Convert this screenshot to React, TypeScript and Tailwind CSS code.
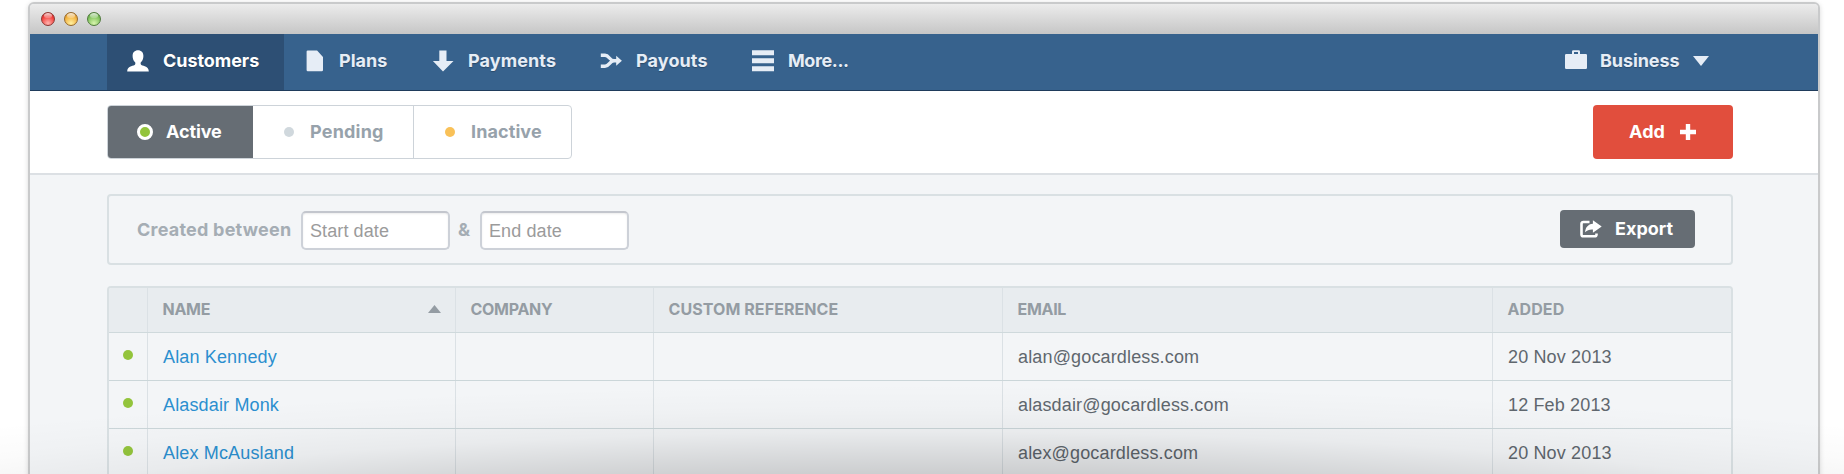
import React from "react";

type IconProps = { className?: string };

const UserIcon = ({ className }: IconProps) => (
  <svg viewBox="0 0 22 22" className={className} fill="currentColor">
    <path d="M11 .3c3.300 0 5.400 2.200 5.400 5.700 0 2.500-.9 4.900-2.300 6.100-.7.600-.7 2.300.2 2.800 2.600 1.200 7.500 1.500 7.500 6.500H.2c0-5 4.900-5.300 7.500-6.500.9-.5.9-2.200.2-2.800C6.500 10.900 5.600 8.500 5.600 6c0-3.500 2.100-5.700 5.400-5.700z" />
  </svg>
);
const FileIcon = ({ className }: IconProps) => (
  <svg viewBox="0 0 22 22" className={className} fill="currentColor">
    <path d="M4.800 .4h9.300l5.900 6.500v13.200a1.200 1.200 0 0 1-1.200 1.200h-14a1.200 1.200 0 0 1-1.200-1.200V1.600a1.200 1.200 0 0 1 1.200-1.200z" />
  </svg>
);
const DownIcon = ({ className }: IconProps) => (
  <svg viewBox="0 0 22 22" className={className} fill="currentColor">
    <path d="M7.300 .4h7.200v10.700h7.000L11 21.500.9 11.100h6.400z" />
  </svg>
);
const MergeIcon = ({ className }: IconProps) => (
  <svg viewBox="0 0 22 22" className={className} fill="none" stroke="currentColor" strokeWidth="3.400">
    <path d="M.8 5.300H5c4.200 0 4.600 5.500 9 5.500h3M.8 16.300H5c4.200 0 4.600-5.500 9-5.500" />
    <path d="M16.200 5.800l5.700 5-5.700 5z" fill="currentColor" stroke="none" />
  </svg>
);
const MenuIcon = ({ className }: IconProps) => (
  <svg viewBox="0 0 22 22" className={className} fill="currentColor">
    <path d="M0 .3h22v5H0zM0 8.300h22v5H0zM0 16.300h22v5H0z" />
  </svg>
);
const CaseIcon = ({ className }: IconProps) => (
  <svg viewBox="0 0 22 22" className={className} fill="currentColor">
    <path fillRule="evenodd" d="M8.300 .3h5.400a1.300 1.300 0 0 1 1.300 1.300V4h5.700A1.200 1.200 0 0 1 22 5.200v12.600a1.200 1.200 0 0 1-1.200 1.200H1.200A1.200 1.200 0 0 1 0 17.800V5.200A1.200 1.200 0 0 1 1.200 4H7V1.600A1.300 1.300 0 0 1 8.300.3zM9 2v2h4V2z" />
  </svg>
);
const ShareIcon = ({ className }: IconProps) => (
  <svg viewBox="0 0 22 18" className={className}>
    <path d="M9.500 2H3.300A1.800 1.800 0 0 0 1.500 3.800v10.700a1.800 1.800 0 0 0 1.800 1.800h11.400a1.800 1.800 0 0 0 1.800-1.800V13.500" fill="none" stroke="currentColor" strokeWidth="2.600" />
    <path d="M12.900 .2l8.800 6.400-8.800 6.200V9.500c-3.500-.2-5.500.5-7.800 2.700.3-4.800 2.800-8 7.800-8.500z" fill="currentColor" />
  </svg>
);

const navItems = [
  { label: "Customers", Icon: UserIcon, box: "w-[177px] bg-[#2d4f74] text-white", text: "tracking-[-0.05px]" },
  { label: "Plans", Icon: FileIcon, box: "-ml-px w-[129px]", text: "" },
  { label: "Payments", Icon: DownIcon, box: "w-[168px]", text: "tracking-[0.1px]" },
  { label: "Payouts", Icon: MergeIcon, box: "w-[152px]", text: "tracking-[0.1px]" },
  { label: "More...", Icon: MenuIcon, box: "w-[160px]", text: "tracking-[-0.4px]" },
];

const columns = [
  { label: "NAME", text: "tracking-[-0.3px]" },
  { label: "COMPANY", text: "tracking-[-0.3px]" },
  { label: "CUSTOM REFERENCE", text: "tracking-[0.08px]" },
  { label: "EMAIL", text: "tracking-[-0.3px]" },
  { label: "ADDED", text: "tracking-[0.1px]" },
];

const customers = [
  { name: "Alan Kennedy", email: "alan@gocardless.com", added: "20 Nov 2013" },
  { name: "Alasdair Monk", email: "alasdair@gocardless.com", added: "12 Feb 2013" },
  { name: "Alex McAusland", email: "alex@gocardless.com", added: "20 Nov 2013" },
];

const grid = "grid grid-cols-[38px_308px_198px_349px_490px_1fr]";

const Light = ({ className }: { className: string }) => (
  <span className={`relative h-[14px] w-[14px] overflow-hidden rounded-full border ${className}`}>
    <span className="absolute top-0 left-[2px] h-[5px] w-[8px] rounded-full bg-linear-to-b from-white/80 to-white/20" />
  </span>
);

const DateInput = ({ placeholder }: { placeholder: string }) => (
  <input
    placeholder={placeholder}
    className="mt-px h-[39px] w-[149px] rounded-[5px] border-2 border-[#cdd1d8] border-t-[#c3c6cd] bg-white pt-[3px] pl-[7px] font-['Liberation_Sans',Arial,sans-serif] text-[18px] font-normal tracking-[0.1px] shadow-[inset_0_1px_2px_rgba(0,0,0,0.08)] placeholder:text-[#9b9b9b]"
  />
);

export default function App() {
  return (
    <div className="relative h-[474px] overflow-hidden bg-white pt-[2px] pr-[24px] pl-[28px] font-[Inter,'Liberation_Sans',sans-serif] text-[18px] leading-6 font-bold">
      <div className="h-[500px] overflow-hidden rounded-t-[6px] border-2 border-[#c9cacb] bg-[#f3f5f7] shadow-[0_1px_5px_rgba(0,0,0,0.15)]">
        <div className="flex h-[30px] items-center gap-[9px] bg-linear-to-b from-[#ececec] to-[#c6c6c6] pl-[11px]">
          <Light className="border-[#8b3632] bg-[radial-gradient(circle_at_50%_85%,#ffb5b0,#f2403c_60%,#b92a28)]" />
          <Light className="border-[#95692c] bg-[radial-gradient(circle_at_50%_85%,#fff0a0,#f3b23f_60%,#bd7d25)]" />
          <Light className="border-[#4f7a3b] bg-[radial-gradient(circle_at_50%_85%,#d8f5ad,#80c25c_60%,#4f8e38)]" />
        </div>

        <nav className="flex h-[57px] border-b border-[#1f3b5b] bg-[#37628d] pl-[77px] text-[#e6edf6]">
          {navItems.map(({ label, Icon, box, text }) => (
            <a key={label} className={`flex items-center gap-[14px] pb-[2px] pl-5 [text-shadow:0_1px_1px_rgba(0,0,0,0.25)] ${box}`}>
              <Icon className="h-[22px] w-[22px]" />
              <span className={text}>{label}</span>
            </a>
          ))}
          <a className="mr-[109px] ml-auto flex items-center pb-[2px] [text-shadow:0_1px_1px_rgba(0,0,0,0.25)]">
            <CaseIcon className="mr-[13px] h-[22px] w-[22px]" />
            <span className="w-[94px] tracking-[-0.1px]">Business</span>
            <svg viewBox="0 0 16 10" className="-ml-px h-[10px] w-4" fill="currentColor">
              <path d="M0 0h16L8 10z" />
            </svg>
          </a>
        </nav>

        <div className="flex h-[84px] items-start justify-between border-b-2 border-[#dce0e4] bg-white pt-[14px] pr-[85px] pl-[77px]">
          <div className="flex h-[54px] w-[465px] overflow-hidden rounded-[4px] border border-[#cdd3d9] text-[#97a2ab]">
            <a className="-my-px -ml-px flex w-[146px] items-center bg-[#666d74] pl-[30px] text-white">
              <span className="mr-[13px] -mt-px h-4 w-4 rounded-full border-3 border-white bg-[#93c43c]" />
              <span className="tracking-[-0.1px]">Active</span>
            </a>
            <a className="flex w-[161px] items-center border-r border-[#cdd3d9] pl-[31px]">
              <span className="mr-[16px] -mt-px h-[10px] w-[10px] rounded-full bg-[#d0d8dd]" />
              <span className="tracking-[0.2px]">Pending</span>
            </a>
            <a className="flex items-center pl-[31px]">
              <span className="mr-[16px] -mt-px h-[10px] w-[10px] rounded-full bg-[#f9c158]" />
              <span className="tracking-[0.1px]">Inactive</span>
            </a>
          </div>
          <a className="flex h-[54px] w-[140px] items-center rounded-[4px] bg-[#e14e3d] pl-[36px] text-white">
            <span className="w-[51px] tracking-[0.1px]">Add</span>
            <svg viewBox="0 0 16 16" className="-mt-px h-4 w-4" fill="currentColor">
              <path d="M5.800 0h4.400v5.800H16v4.400h-5.800V16H5.800v-5.800H0V5.800h5.800z" />
            </svg>
          </a>
        </div>

        <div className="pt-[19px] pr-[85px] pl-[77px]">
          <div className="flex h-[71px] items-center rounded-[4px] border-2 border-[#d9e0e3] pr-[36px] pl-[28px] text-[#a5adb4]">
            <span className="w-[164px] tracking-[0.22px]">Created between</span>
            <DateInput placeholder="Start date" />
            <span className="w-[30px] pl-2">&amp;</span>
            <DateInput placeholder="End date" />
            <a className="-mt-px ml-auto flex h-[38px] w-[135px] items-center rounded-[4px] bg-[#666d74] pl-[20px] text-white">
              <ShareIcon className="mr-[13px] h-[18px] w-[22px]" />
              <span>Export</span>
            </a>
          </div>

          <div className="mt-[21px] overflow-hidden rounded-t-[4px] border-2 border-b-0 border-[#d9e0e3]">
            <div className={`${grid} h-[45px] border-b border-[#cfd9dc] bg-[#e8ecef] text-[16px] text-[#949ca3]`}>
              <span />
              {columns.map(({ label, text }) => (
                <span key={label} className={`flex items-center justify-between border-l border-[#dbe1e5] pb-[2px] pl-[14.5px] ${text}`}>
                  {label}
                  {label === "NAME" && (
                    <svg viewBox="0 0 13 8" className="mr-[14px] h-[8px] w-[13px]" fill="currentColor">
                      <path d="M0 8h13L6.500 0z" />
                    </svg>
                  )}
                </span>
              ))}
            </div>
            {customers.map(({ name, email, added }) => (
              <div
                key={name}
                className={`${grid} h-12 border-b border-[#cbd6d9] font-['Liberation_Sans',Arial,sans-serif] text-[18px] font-normal tracking-[0.15px] text-[#5f676e] *:flex *:items-center *:pl-[14px] [&>*+*]:border-l [&>*+*]:border-[#dbe1e5] [&>*+*]:pl-[15px]`}
              >
                <span>
                  <span className="mb-[3px] h-[10px] w-[10px] rounded-full bg-[#93c43c]" />
                </span>
                <span className="text-[#2b8fcf]">{name}</span>
                <span />
                <span />
                <span>{email}</span>
                <span>{added}</span>
              </div>
            ))}
          </div>
        </div>
      </div>
      <div className="pointer-events-none absolute inset-x-0 bottom-0 h-[100px] bg-[radial-gradient(ellipse_1500px_190px_at_50%_200px,rgba(0,0,0,0.165)_52%,rgba(0,0,0,0.115)_62%,rgba(0,0,0,0.045)_75%,rgba(0,0,0,0.015)_87%,transparent)]" />
    </div>
  );
}
